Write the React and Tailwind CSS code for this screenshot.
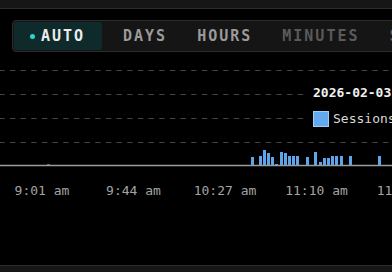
import React from 'react';

const mono = { fontFamily: '"DejaVu Sans Mono", "Liberation Mono", monospace' };

const ranges = [
    { label: 'DAYS', tone: 'text-[#9a9a9a]' },
    { label: 'HOURS', tone: 'text-[#9a9a9a]' },
    { label: 'MINUTES', tone: 'text-[#5a5a5a]' },
    { label: 'SECONDS', tone: 'text-[#5a5a5a]' },
];

// [x, height] of each session bar, baseline at y=113 in chart coords
const bars = [
    [251, 8], [259, 9], [263, 15], [267, 12], [271, 8], [275, 1],
    [280, 13], [284, 12], [288, 9], [292, 9], [296, 9], [306, 8],
    [314, 13], [319, 3], [323, 7], [327, 7], [331, 9], [335, 9],
    [340, 9], [349, 9], [378, 9],
];

const ticks = [
    { x: 42, label: '9:01 am' },
    { x: 133.5, label: '9:44 am' },
    { x: 225, label: '10:27 am' },
    { x: 316.5, label: '11:10 am' },
    { x: 408, label: '11:53 am' },
];

const grid = [18.5, 42.5, 66.5, 90.5];

const App = () => {
    return (
        <div className="w-[392px] h-[272px] bg-black overflow-hidden flex flex-col" style={mono}>
            <div className="h-[9px] shrink-0 bg-[#161616] border-b border-[#2c2c2c]"></div>

            {/* range selector */}
            <div className="mt-[11px] pl-[12px] shrink-0">
                <div className="w-max h-[32px] flex items-center p-[1px] border border-[#2b2b2b] bg-[#151515] rounded-[4px]">
                    <div className="h-[28px] w-[88px] pl-[16px] flex items-center gap-[6px] bg-[#0f2a2a] rounded-[3px]">
                        <span className="w-[5px] h-[5px] rounded-full bg-[#2dd4cf]"></span>
                        <span className="text-[15px] font-bold tracking-[2px] text-[#ececec]">AUTO</span>
                    </div>
                    <div className="flex ml-[6px]">
                        {ranges.map((r) => (
                            <span key={r.label} className={`px-[15px] text-[15px] font-bold tracking-[2px] ${r.tone}`}>
                                {r.label}
                            </span>
                        ))}
                    </div>
                </div>
            </div>

            {/* chart */}
            <div className="relative h-[213px] shrink-0">
                <svg width="392" height="213" className="block">
                    {grid.map((y) => (
                        <line key={y} x1="0" x2="392" y1={y} y2={y} stroke="#444" strokeWidth="1" strokeDasharray="5.33 5.33" strokeDashoffset="0.67" />
                    ))}
                    <rect x="47" y="112" width="3" height="1" fill="#3d6f9e" />
                    {bars.map(([x, h]) => (
                        <rect key={x} x={x} y={113 - h} width="3" height={h} fill="#5ea6ec" />
                    ))}
                    <line x1="0" x2="392" y1="113.5" y2="113.5" stroke="#9c9c9c" strokeWidth="1.5" />
                    {ticks.map((t) => (
                        <text key={t.label} x={t.x} y="143" textAnchor="middle" fontSize="13" fill="#a3a3a3" style={mono}>
                            {t.label}
                        </text>
                    ))}
                </svg>

                {/* tooltip */}
                <div className="absolute left-[305px] top-[26px] w-[110px] h-[62px] bg-black pl-[8px] pt-[7px]">
                    <div className="text-[13px] leading-[16px] font-bold text-[#f0f0f0] whitespace-nowrap">2026-02-03</div>
                    <div className="mt-[10px] flex items-center gap-[4px]">
                        <span className="w-[16px] h-[16px] shrink-0 bg-[#63a9f0] border border-[#a3cdf8]"></span>
                        <span className="text-[13px] leading-[16px] text-[#d8d8d8] whitespace-nowrap">Sessions</span>
                    </div>
                </div>
            </div>

            <div className="flex-1 bg-[#161616] border-t border-[#2c2c2c]"></div>
        </div>
    );
};

export default App;
